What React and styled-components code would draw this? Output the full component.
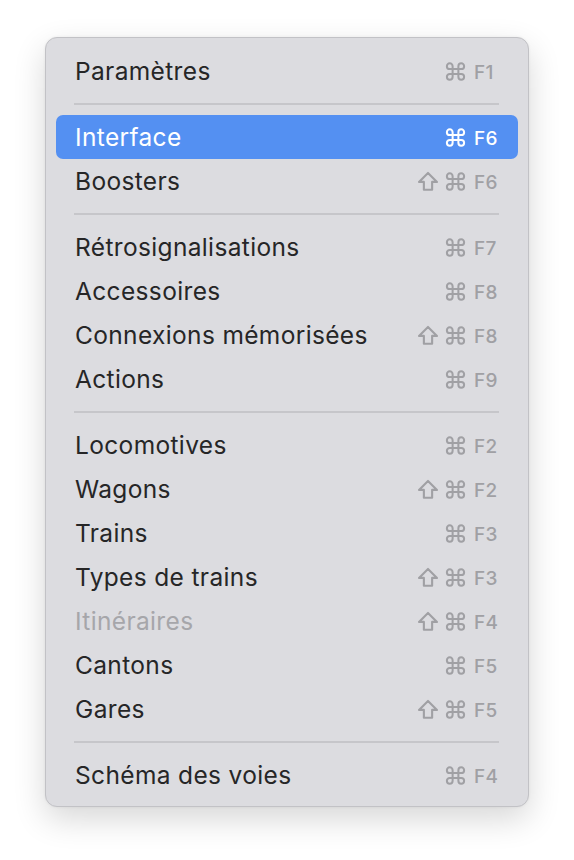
import React from 'react';
import styled, { createGlobalStyle } from 'styled-components';

const GlobalStyle = createGlobalStyle`
	html, body {
		margin: 0;
		padding: 0;
		background: #ffffff;
	}
	body {
		font-family: Inter, "Noto Sans", "Liberation Sans", sans-serif;
		-webkit-font-smoothing: antialiased;
	}
`;

const Page = styled.div`
	width: 574px;
	height: 860px;
	box-sizing: border-box;
	padding: 37px 0 0 45px;
`;

const Menu = styled.div`
	width: 484px;
	box-sizing: border-box;
	padding: 11px 10px 9px;
	background: #dcdce0;
	border: 1px solid #c2c2c6;
	border-radius: 12px;
	box-shadow: 0 12px 32px rgba(0, 0, 0, 0.16), 0 0 3px rgba(0, 0, 0, 0.06);
	display: flex;
	flex-direction: column;
`;

const Item = styled.div`
	height: 44px;
	display: flex;
	align-items: center;
	justify-content: space-between;
	padding: 0 20px 0 19px;
	border-radius: 7px;
	background: ${(p) => (p.$active ? '#5490f2' : 'transparent')};
	color: ${(p) => (p.$active ? '#ffffff' : p.$disabled ? '#a6a6aa' : '#262627')};
	font-size: 24.5px;
	letter-spacing: 0.35px;
`;

const Separator = styled.div`
	height: 22px;
	display: flex;
	align-items: center;
	padding: 0 19px 0 18px;

	&::after {
		content: '';
		flex: 1;
		height: 2px;
		background: #c6c6ca;
	}
`;

const Shortcut = styled.div`
	display: flex;
	align-items: center;
	gap: 5px;
	color: ${(p) => (p.$active ? '#ffffff' : '#a0a0a4')};
`;

const Key = styled.span`
	width: 24px;
	margin-left: 2px;
	padding-top: 3px;
	font-size: 19px;
	font-weight: 500;
	letter-spacing: 0.3px;
	text-align: left;
`;

const Icon = styled.svg`
	width: ${(p) => p.$size}px;
	height: ${(p) => p.$size}px;
	display: block;
`;

function CmdIcon() {
	return (
		<Icon $size={23} viewBox="0 0 24 24" fill="none" stroke="currentColor" strokeWidth="2.1" strokeLinecap="round" strokeLinejoin="round">
			<path d="M15 6.5v11a3 3 0 1 0 3-3H6a3 3 0 1 0 3 3v-11a3 3 0 1 0-3 3h12a3 3 0 1 0-3-3" />
		</Icon>
	);
}

function ShiftIcon() {
	return (
		<Icon $size={22} viewBox="0 0 24 24" fill="none" stroke="currentColor" strokeWidth="2.3" strokeLinejoin="round">
			<path d="M7.5 21.5v-8.5H2.2L12 3.2l9.8 9.8h-5.3v8.5h-9z" />
		</Icon>
	);
}

const sections = [
	[{ label: 'Paramètres', key: 'F1' }],
	[
		{ label: 'Interface', key: 'F6', active: true },
		{ label: 'Boosters', key: 'F6', shift: true },
	],
	[
		{ label: 'Rétrosignalisations', key: 'F7' },
		{ label: 'Accessoires', key: 'F8' },
		{ label: 'Connexions mémorisées', key: 'F8', shift: true },
		{ label: 'Actions', key: 'F9' },
	],
	[
		{ label: 'Locomotives', key: 'F2' },
		{ label: 'Wagons', key: 'F2', shift: true },
		{ label: 'Trains', key: 'F3' },
		{ label: 'Types de trains', key: 'F3', shift: true },
		{ label: 'Itinéraires', key: 'F4', shift: true, disabled: true },
		{ label: 'Cantons', key: 'F5' },
		{ label: 'Gares', key: 'F5', shift: true },
	],
	[{ label: 'Schéma des voies', key: 'F4' }],
];

export default function App() {
	return (
		<>
			<GlobalStyle />
			<Page>
				<Menu>
					{sections.map((items, i) => (
						<React.Fragment key={i}>
							{i > 0 && <Separator />}
							{items.map((it) => (
								<Item key={it.label} $active={it.active} $disabled={it.disabled}>
									<span>{it.label}</span>
									<Shortcut $active={it.active}>
										{it.shift && <ShiftIcon />}
										<CmdIcon />
										<Key>{it.key}</Key>
									</Shortcut>
								</Item>
							))}
						</React.Fragment>
					))}
				</Menu>
			</Page>
		</>
	);
}
